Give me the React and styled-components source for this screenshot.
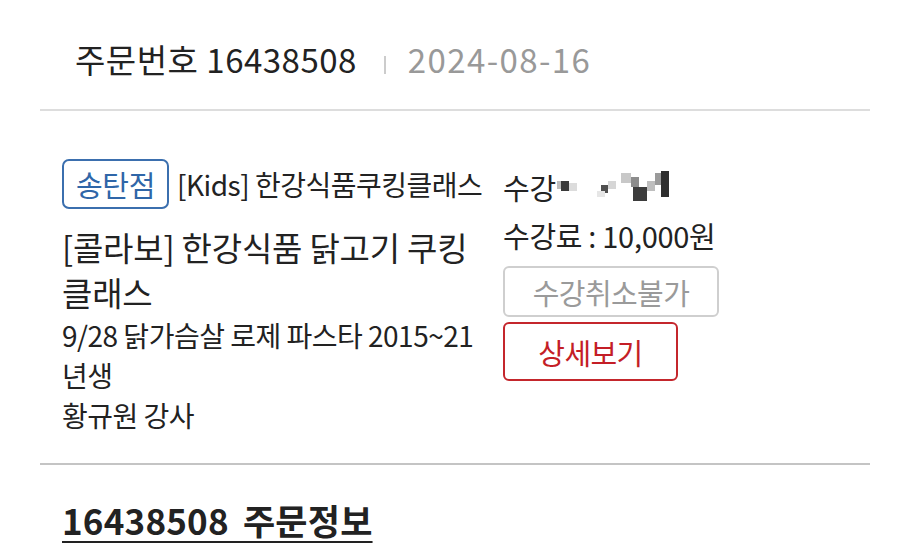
import React from "react"
import styled, { createGlobalStyle } from "styled-components"

const Global = createGlobalStyle`
  html, body {
    margin: 0;
    padding: 0;
    background: #ffffff;
  }
  body {
    font-family: "Noto Sans CJK KR", "Noto Sans", sans-serif;
    color: #222222;
    word-break: keep-all;
  }
`

const Page = styled.div`
  width: 900px;
  height: 556px;
  overflow: hidden;
  padding: 0 30px 0 40px;
  box-sizing: border-box;
`

const OrderHead = styled.div`
  display: flex;
  align-items: center;
  height: 111px;
  padding: 9px 0 0 35px;
  border-bottom: 2px solid #dddddd;
  box-sizing: border-box;
`

const OrderNo = styled.span`
  font-size: 33px;
  letter-spacing: 0.5px;
  color: #222222;
`

const Sep = styled.span`
  width: 2px;
  height: 18px;
  background: #cccccc;
  margin: 12px 22px 0 27px;
`

const OrderDate = styled.span`
  font-size: 33px;
  color: #999999;
  letter-spacing: 1.4px;
`

const Item = styled.div`
  display: grid;
  grid-template-columns: 441px 1fr;
  padding: 48px 0 28px 22px;
  border-bottom: 2px solid #c4c4c4;
`

const Info = styled.div`
  display: flex;
  flex-direction: column;
`

const Branch = styled.div`
  display: flex;
  align-items: center;
  gap: 8px;
`

const Badge = styled.span`
  display: inline-flex;
  align-items: center;
  justify-content: center;
  height: 50px;
  width: 107px;
  border: 2px solid #3b6fae;
  border-radius: 7px;
  box-sizing: border-box;
  font-size: 29px;
  letter-spacing: -0.4px;
  color: #2f66a8;
`

const Program = styled.span`
  font-size: 28px;
  letter-spacing: -0.5px;
  color: #222222;
`

const Title = styled.div`
  margin-top: 16px;
  font-size: 33px;
  line-height: 45px;
  letter-spacing: -0.2px;
  color: #222222;
`

const Desc = styled.div`
  font-size: 28px;
  line-height: 40px;
  letter-spacing: -0.5px;
  color: #222222;
`

const Side = styled.div`
  display: flex;
  flex-direction: column;
  align-items: flex-start;
  padding-top: 4px;
`

const SideLine = styled.div`
  display: flex;
  align-items: center;
  height: 48px;
  font-size: 29px;
  letter-spacing: -0.3px;
  color: #222222;
`

const Button = styled.button`
  display: inline-flex;
  align-items: center;
  justify-content: center;
  height: ${(p) => p.$h}px;
  width: ${(p) => p.$w}px;
  margin-top: ${(p) => p.$mt}px;
  padding: 0;
  background: #ffffff;
  border: 2px solid ${(p) => (p.$red ? "#c4262c" : "#cfcfcf")};
  border-radius: 6px;
  font-family: "Noto Sans CJK KR", "Noto Sans", sans-serif;
  font-size: 29px;
  letter-spacing: -0.6px;
  color: ${(p) => (p.$red ? "#c41e26" : "#9a9a9a")};
`

const Footer = styled.div`
  padding: 29px 0 0 22px;
`

const InfoLink = styled.span`
  font-size: 35px;
  font-weight: 700;
  letter-spacing: 0.2px;
  word-spacing: 6px;
  color: #222222;
  text-decoration: underline;
  text-underline-offset: 6px;
  text-decoration-thickness: 2px;
`

const mosaic = [
  [0, 10, 6, 8, "#bdbdbd"],
  [4, 10, 8, 10, "#3a3a3a"],
  [12, 12, 8, 8, "#dcdcdc"],
  [44, 14, 7, 8, "#505050"],
  [51, 10, 8, 8, "#d6d6d6"],
  [40, 20, 8, 6, "#e6e6e6"],
  [64, 2, 10, 10, "#c8c8c8"],
  [74, 6, 8, 10, "#8c8c8c"],
  [76, 16, 14, 14, "#3c3c3c"],
  [90, 10, 8, 10, "#bebebe"],
  [98, 2, 8, 12, "#9a9a9a"],
  [104, 0, 8, 26, "#2e2e2e"],
]

const Mosaic = () => (
  <svg width="116" height="32" viewBox="0 0 116 32" style={{ marginLeft: 1 }}>
    {mosaic.map(([x, y, w, h, c], i) => (
      <rect key={i} x={x} y={y} width={w} height={h} fill={c} />
    ))}
  </svg>
)

const App = () => (
  <Page>
    <Global />
    <OrderHead>
      <OrderNo>주문번호 16438508</OrderNo>
      <Sep />
      <OrderDate>2024-08-16</OrderDate>
    </OrderHead>

    <Item>
      <Info>
        <Branch>
          <Badge>송탄점</Badge>
          <Program>[Kids] 한강식품쿠킹클래스</Program>
        </Branch>
        <Title>[콜라보] 한강식품 닭고기 쿠킹 클래스</Title>
        <Desc>
          9/28 닭가슴살 로제 파스타 2015~21 년생
          <br />
          황규원 강사
        </Desc>
      </Info>
      <Side>
        <SideLine>
          수강
          <Mosaic />
        </SideLine>
        <SideLine>수강료 : 10,000원</SideLine>
        <Button $w={216} $h={51} $mt={7}>
          수강취소불가
        </Button>
        <Button $red $w={175} $h={59} $mt={5}>
          상세보기
        </Button>
      </Side>
    </Item>

    <Footer>
      <InfoLink>16438508 주문정보</InfoLink>
    </Footer>
  </Page>
)

export default App
